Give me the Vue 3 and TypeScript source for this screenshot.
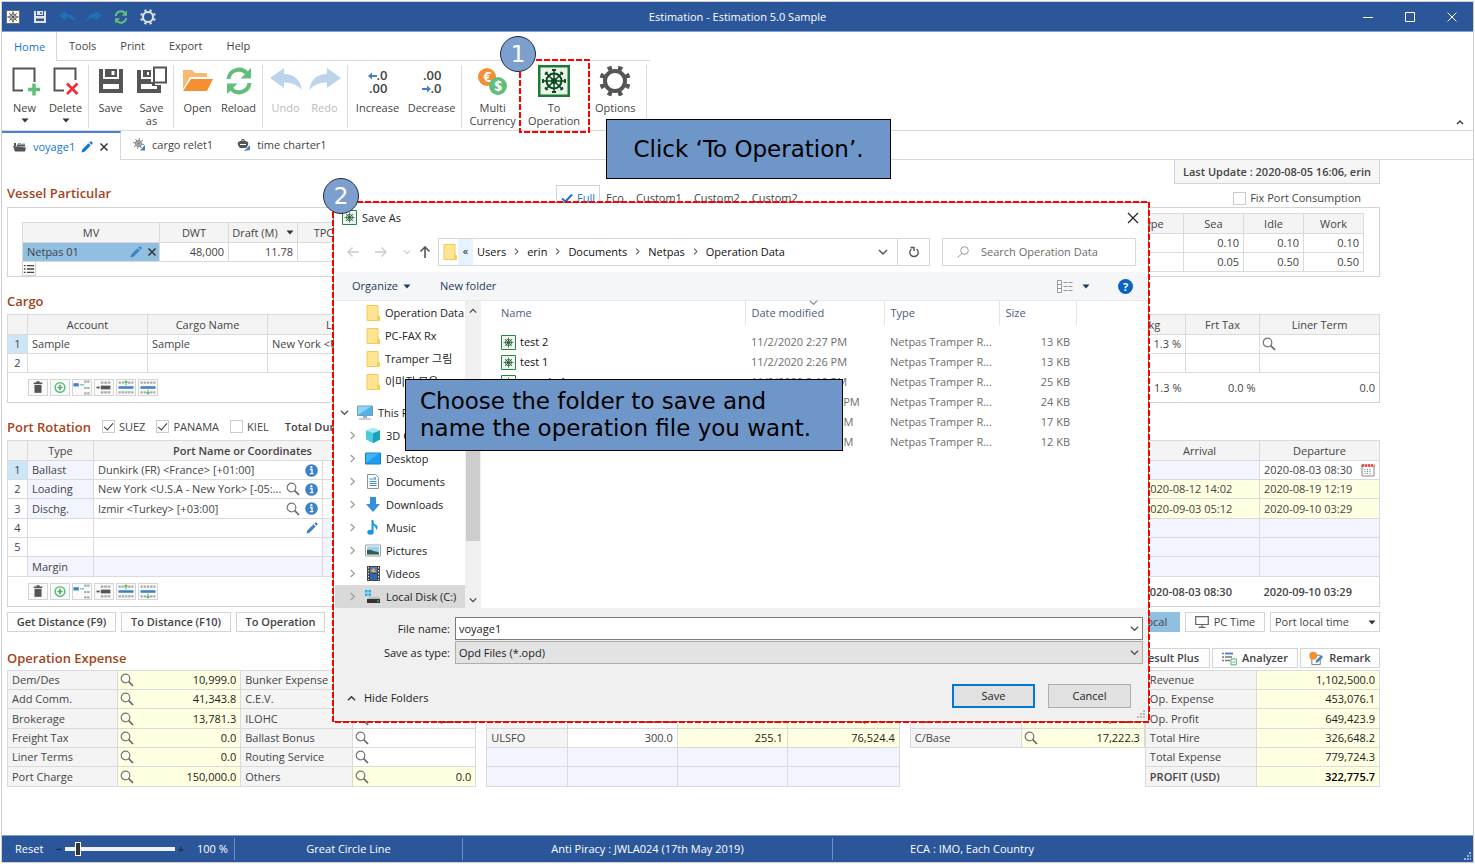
<script setup lang="ts">
import { ref } from 'vue'

interface RibbonItem { id: string; icon: string; lines: string[]; caret?: boolean; disabled?: boolean }
interface RibbonGroup { size: string; items: RibbonItem[] }

const menus: string[] = ['Home', 'Tools', 'Print', 'Export', 'Help']

const ribbon: RibbonGroup[] = [
  { size: 'g-new', items: [
    { id: 'new', icon: 'i-new', lines: ['New'], caret: true },
    { id: 'delete', icon: 'i-delete', lines: ['Delete'], caret: true },
  ] },
  { size: 'g-save', items: [
    { id: 'save', icon: 'i-disk', lines: ['Save'] },
    { id: 'saveas', icon: 'i-saveas', lines: ['Save', 'as'] },
  ] },
  { size: 'g-open', items: [
    { id: 'open', icon: 'i-open', lines: ['Open'] },
    { id: 'reload', icon: 'i-reload', lines: ['Reload'] },
  ] },
  { size: 'g-undo', items: [
    { id: 'undo', icon: 'i-undo', lines: ['Undo'], disabled: true },
    { id: 'redo', icon: 'i-redo', lines: ['Redo'], disabled: true },
  ] },
  { size: 'g-dec', items: [
    { id: 'inc', icon: 'inc', lines: ['Increase'] },
    { id: 'dec', icon: 'dec', lines: ['Decrease'] },
  ] },
  { size: 'g-ops', items: [
    { id: 'currency', icon: 'coins', lines: ['Multi', 'Currency'] },
    { id: 'operation', icon: 'i-helm', lines: ['To', 'Operation'] },
    { id: 'options', icon: 'i-gear', lines: ['Options'] },
  ] },
]

const rowTools: { icon: string; label: string }[] = [
  { icon: 't-trash', label: 'Delete row' },
  { icon: 't-plus', label: 'Add row' },
  { icon: 't-split', label: 'Split row' },
  { icon: 't-merge', label: 'Merge rows' },
  { icon: 't-above', label: 'Insert above' },
  { icon: 't-below', label: 'Insert below' },
]

interface PortRow { no: string; type: string; port: string; mag?: boolean; info?: boolean; pen?: boolean; arr: string; dep: string; state: string }
const ports: PortRow[] = [
  { no: '1', type: 'Ballast', port: 'Dunkirk (FR) <France> [+01:00]', info: true, arr: '', dep: '2020-08-03 08:30', state: 'first' },
  { no: '2', type: 'Loading', port: 'New York <U.S.A - New York> [-05:...', mag: true, info: true, arr: '2020-08-12 14:02', dep: '2020-08-19 12:19', state: 'calc' },
  { no: '3', type: 'Dischg.', port: 'Izmir <Turkey> [+03:00]', mag: true, info: true, arr: '2020-09-03 05:12', dep: '2020-09-10 03:29', state: 'calc' },
  { no: '4', type: '', port: '', pen: true, arr: '', dep: '', state: 'blank' },
  { no: '5', type: '', port: '', arr: '', dep: '', state: 'blank' },
  { no: '', type: 'Margin', port: '', arr: '', dep: '', state: 'margin' },
]

interface ExpenseRow { a: string; av: string; b: string; bv: string; white?: boolean }
const expenses: ExpenseRow[] = [
  { a: 'Dem/Des', av: '10,999.0', b: 'Bunker Expense', bv: '' },
  { a: 'Add Comm.', av: '41,343.8', b: 'C.E.V.', bv: '' },
  { a: 'Brokerage', av: '13,781.3', b: 'ILOHC', bv: '4,500.0', white: true },
  { a: 'Freight Tax', av: '0.0', b: 'Ballast Bonus', bv: '', white: true },
  { a: 'Liner Terms', av: '0.0', b: 'Routing Service', bv: '', white: true },
  { a: 'Port Charge', av: '150,000.0', b: 'Others', bv: '0.0' },
]
const bunkers: string[][] = [
  ['', '', '', ''],
  ['', '', '', ''],
  ['MGO', '300.0', '9.0', '3,409.7'],
  ['ULSFO', '300.0', '255.1', '76,524.4'],
  ['', '', '', ''],
  ['', '', '', ''],
]
const hires: string[][] = [['', ''], ['', ''], ['Net Hire', '8,002.3'], ['C/Base', '17,222.3']]
const results: string[][] = [
  ['Revenue', '1,102,500.0'],
  ['Op. Expense', '453,076.1'],
  ['Op. Profit', '649,423.9'],
  ['Total Hire', '326,648.2'],
  ['Total Expense', '779,724.3'],
  ['PROFIT (USD)', '322,775.7'],
]

const crumbs: string[] = ['Users', 'erin', 'Documents', 'Netpas', 'Operation Data']
const quickFolders: string[] = ['Operation Data', 'PC-FAX Rx', 'Tramper 그림', '이미지 모음']
const drives: { icon: string; name: string }[] = [
  { icon: 'd-cube', name: '3D Objects' },
  { icon: 'd-desktop', name: 'Desktop' },
  { icon: 'd-docs', name: 'Documents' },
  { icon: 'd-down', name: 'Downloads' },
  { icon: 'd-music', name: 'Music' },
  { icon: 'd-pics', name: 'Pictures' },
  { icon: 'd-video', name: 'Videos' },
  { icon: 'd-disk', name: 'Local Disk (C:)' },
]
const files: string[][] = [
  ['test 2', '11/2/2020 2:27 PM', '13 KB'],
  ['test 1', '11/2/2020 2:26 PM', '13 KB'],
  ['sample 1', '11/2/2020 2:19 PM', '25 KB'],
  ['', '10/27/2020 12:15 PM', '24 KB'],
  ['', '10/27/2020 5:11 PM', '17 KB'],
  ['', '10/27/2020 4:32 PM', '12 KB'],
]

const zoomLevel = ref(10)
const fileName = ref('voyage1')
const suez = ref(true)
const panama = ref(true)
const kiel = ref(false)
const fixPort = ref(false)
</script>

<template>
  <div class="window">
    <svg class="sprite" aria-hidden="true">
      <symbol id="i-new" viewBox="0 0 32 32"><path d="M14 25.500H4.500V3.500H25.500V17" fill="none" stroke="#555" stroke-width="2" /><path d="M19 24.500H31M25 18.500V30.500" stroke="#62bf78" stroke-width="3.500" /></symbol>
      <symbol id="i-delete" viewBox="0 0 32 32"><path d="M14 25.500H4.500V3.500H25.500V15" fill="none" stroke="#555" stroke-width="2" /><path d="M17 18.500L27.500 29M27.500 18.500L17 29" stroke="#ee2f33" stroke-width="2.800" /></symbol>
      <symbol id="i-disk" viewBox="0 0 32 32"><path d="M4 4H8V14H24V4H28V28H4ZM8 19V24H24V19Z" fill="currentColor" fill-rule="evenodd" /><path d="M10 4H22V12H10ZM16.500 6V10H19.500V6Z" fill="currentColor" fill-rule="evenodd" /></symbol>
      <symbol id="i-saveas" viewBox="0 0 32 32"><path d="M1 5H5V14H15V17H19V20H25V28H1ZM5 19V24H21V21H16V19Z" fill="#555" fill-rule="evenodd" /><path d="M7 5H15V12H7ZM11 7V10H13V7Z" fill="#555" fill-rule="evenodd" /><path d="M18 2.500H30V17.500H18Z" fill="#fff" stroke="#555" stroke-width="2" /></symbol>
      <symbol id="i-open" viewBox="0 0 32 32"><path d="M1 24V5H10L13 8H25V12H8Z" fill="#fbb873" /><path d="M9 14H31L25 26H1Z" fill="#f68f32" /></symbol>
      <symbol id="i-reload" viewBox="0 0 32 32"><path d="M5.500 14A10.500 10.500 0 0 1 24 8.500M26.500 18A10.500 10.500 0 0 1 8 23.500" fill="none" stroke="#63be7b" stroke-width="4" /><path d="M28 3V13.500H17.500ZM4 29V18.500H14.500Z" fill="#63be7b" /></symbol>
      <symbol id="i-undo" viewBox="0 0 32 32"><path d="M0 13L14 3V9Q29 9 32 25Q25 17 14 17.500V23Z" fill="currentColor" /></symbol>
      <symbol id="i-redo" viewBox="0 0 32 32"><path d="M32 13L18 3V9Q3 9 0 25Q7 17 18 17.500V23Z" fill="currentColor" /></symbol>
      <symbol id="i-gear" viewBox="0 0 32 32"><circle cx="16" cy="16" r="10" fill="none" stroke="currentColor" stroke-width="4" /><circle cx="16" cy="16" r="13.500" fill="none" stroke="currentColor" stroke-width="4.500" pathLength="160" stroke-dasharray="8 12" stroke-dashoffset="14" /></symbol>
      <symbol id="i-helm" viewBox="0 0 32 32"><rect x="0" y="0" width="32" height="32" fill="#1d7a34" /><rect x="2.500" y="2.500" width="27" height="27" fill="#e9f3eb" /><g stroke="#0c4a1c" fill="none"><circle cx="16" cy="16" r="7.500" stroke-width="2" /><circle cx="16" cy="16" r="2" stroke-width="2" /><path d="M16 4V28M4 16H28M7.500 7.500L24.500 24.500M24.500 7.500L7.500 24.500" stroke-width="1.500" /><path d="M14 5H18M14 27H18M5 14V18M27 14V18M7 9.500L9.500 7M22.500 25L25 22.500M25 9.500L22.500 7M7 22.500L9.500 25" stroke-width="1.800" /></g></symbol>
      <symbol id="i-helm-small" viewBox="0 0 15 15"><path d="M0.500 0.500H14.500V14.500H0.500Z" fill="#eef6f0" stroke="#2c8544" /><g stroke="#2d5f3b" fill="none"><circle cx="7.500" cy="7.500" r="3" /><path d="M7.500 2.500V12.500M2.500 7.500H12.500M4 4L11 11M11 4L4 11" stroke-width="0.800" /></g><circle cx="7.500" cy="7.500" r="1.200" fill="#2d5f3b" /></symbol>
      <symbol id="i-mag" viewBox="0 0 14 14"><circle cx="5.500" cy="5.500" r="4.300" fill="#fff" fill-opacity="0.500" stroke="#777" stroke-width="1.200" /><path d="M8.700 8.700L13 13" stroke="#666" stroke-width="1.700" /></symbol>
      <symbol id="i-info" viewBox="0 0 13 13"><circle cx="6.500" cy="6.500" r="6.300" fill="#3f83c6" /><path d="M5 5.500H7V9.500M4.800 9.700H8.400" stroke="#fff" stroke-width="1.300" fill="none" /><circle cx="6.400" cy="3.200" r="1.100" fill="#fff" /></symbol>
      <symbol id="i-pen" viewBox="0 0 12 12"><path d="M0.500 11.500L1.300 8.500L7.500 2.300L9.700 4.500L3.500 10.700ZM8.300 1.500L9.300 0.500Q10 0 10.700 0.700L11.300 1.300Q12 2 11.500 2.700L10.500 3.700Z" fill="currentColor" /></symbol>
      <symbol id="i-x" viewBox="0 0 10 10"><path d="M1.500 1.500L8.500 8.500M8.500 1.500L1.500 8.500" stroke="currentColor" stroke-width="1.500" /></symbol>
      <symbol id="i-down" viewBox="0 0 8 5"><path d="M0.500 0.500H7.500L4 4.500Z" fill="currentColor" /></symbol>
      <symbol id="i-chev" viewBox="0 0 10 10"><path d="M1 3L5 7L9 3" fill="none" stroke="currentColor" stroke-width="1.500" /></symbol>
      <symbol id="i-next" viewBox="0 0 10 10"><path d="M3 1L7 5L3 9" fill="none" stroke="currentColor" stroke-width="1.500" /></symbol>
      <symbol id="i-list" viewBox="0 0 14 14"><path d="M1 3H3M1 7H3M1 11H3M4.500 3H13M4.500 7H13M4.500 11H13" stroke="#444" stroke-width="1.500" /></symbol>
      <symbol id="t-trash" viewBox="0 0 16 14"><path d="M4 3H12M6.500 1.700H9.500" stroke="#555" stroke-width="1.300" /><path d="M4.700 4.500H11.300V12H4.700Z" fill="#555" /></symbol>
      <symbol id="t-plus" viewBox="0 0 16 14"><circle cx="8" cy="7" r="4.500" fill="#fff" stroke="#63be7b" stroke-width="1.500" /><path d="M5.500 7H10.500M8 4.500V9.500" stroke="#4db067" stroke-width="1.600" /></symbol>
      <symbol id="t-split" viewBox="0 0 16 14"><path d="M0 4.500H5" stroke="#3f83c6" stroke-width="3" /><path d="M6 4.500H10" stroke="#63be7b" stroke-width="1" /><path d="M10 1.500H15M10 7.500H15M10 12.500H15" stroke="#aaa" stroke-width="2" stroke-dasharray="2.200 0.600" /></symbol>
      <symbol id="t-merge" viewBox="0 0 16 14"><path d="M1 7H4" stroke="#555" stroke-width="1.600" /><path d="M5 7H14" stroke="#555" stroke-width="3.500" /><path d="M5 2.500H14M5 11.500H14" stroke="#aaa" stroke-width="2" stroke-dasharray="2.500 0.700" /></symbol>
      <symbol id="t-above" viewBox="0 0 16 14"><path d="M1 7H15" stroke="#3f83c6" stroke-width="2.400" /><path d="M1 2.500H6M10 2.500H15M1 11.500H15" stroke="#aaa" stroke-width="2" stroke-dasharray="2.200 0.800" /><path d="M8 5V1M6.500 2.500L8 1L9.500 2.500" stroke="#4db067" fill="none" /></symbol>
      <symbol id="t-below" viewBox="0 0 16 14"><path d="M1 7H15" stroke="#3f83c6" stroke-width="2.400" /><path d="M1 11.500H6M10 11.500H15M1 2.500H15" stroke="#aaa" stroke-width="2" stroke-dasharray="2.200 0.800" /><path d="M8 9V13M6.500 11.500L8 13L9.500 11.500" stroke="#4db067" fill="none" /></symbol>
      <symbol id="i-ship" viewBox="0 0 14 12"><path d="M0 5L13 6.500L12 10.500H2Z" fill="#555" /><path d="M1 2H3V5H1ZM4 3.500H12V5.500H4Z" fill="#555" /><path d="M5 2H8V3.500H5ZM9 2.500H12V4H9Z" fill="#6aa5dc" /></symbol>
      <symbol id="i-relet" viewBox="0 0 14 14"><circle cx="6.500" cy="5.500" r="3" fill="none" stroke="#777" /><path d="M7.500 0L5.500 11M1 4.500L12 6.500M3.500 1L9.500 10M11 2L2 9" stroke="#777" stroke-width="0.900" /><path d="M8 12.500L13 7V12.500Z" fill="#3f83c6" /></symbol>
      <symbol id="i-charter" viewBox="0 0 14 14"><path d="M1 4Q6 1 11 4Q12 7 9 10H3Q0 7 1 4Z" fill="#555" /><path d="M4 2.500Q6 0 8 2.500" fill="none" stroke="#555" /><path d="M7 13L13 7V12Z" fill="#3f83c6" /><path d="M3 6.500H9" stroke="#fff" /></symbol>
      <symbol id="i-cal" viewBox="0 0 14 14"><path d="M1 3V13H13V3" fill="#fff" stroke="#888" /><path d="M0.500 2.500H13.500" stroke="#e0393e" stroke-width="2.500" stroke-dasharray="2.500 0.600" /><path d="M3.500 6.500H11M3.500 8.500H11M3.500 10.500H11" stroke="#777" stroke-dasharray="1 1.500" /></symbol>
      <symbol id="i-pc" viewBox="0 0 14 12"><path d="M0.700 0.700H13.300V8.500H0.700ZM7 8.500V11M3.500 11.300H10.500" fill="none" stroke="#666" stroke-width="1.200" /></symbol>
      <symbol id="i-analyze" viewBox="0 0 15 14"><path d="M0 2H2M0 5.500H2M0 9H2" stroke="#777" stroke-width="1.500" /><path d="M3 2H11" stroke="#3f83c6" stroke-width="1.800" /><path d="M3 5.500H10M3 9H8" stroke="#777" stroke-width="1.500" /><path d="M9 7.500H14.300V13.300H9ZM10.500 10.500H13" fill="#fff" stroke="#4db067" /></symbol>
      <symbol id="i-remark" viewBox="0 0 16 15"><path d="M3 4H12V14H3Z" fill="#fff" stroke="#777" /><circle cx="4.500" cy="4.500" r="4.200" fill="#f68f32" /><path d="M7 12L7.500 9.500L13 4L15 6L9.500 11.500Z" fill="#3f83c6" /></symbol>
      <symbol id="i-folder" viewBox="0 0 14 16"><path d="M1 0.500H12V11L13.500 11.500V15.500H1Z" fill="#ffe591" stroke="#f3ca55" /><path d="M11 11H13.500V15.500H11Z" fill="#f6cf57" /></symbol>
      <symbol id="d-pc" viewBox="0 0 16 15"><path d="M0.500 1H15.500V10.500H0.500Z" fill="#4db5ee" stroke="#7f9aac" /><path d="M1 10L14 1.500H1Z" fill="#8bd3f8" /><path d="M6 11H10V13H6Z" fill="#9db0bd" /><path d="M2 14H14" stroke="#8b9aa5" /></symbol>
      <symbol id="d-cube" viewBox="0 0 16 15"><path d="M8 0L15 2.500V11.500L8 15L1 11.500V2.500Z" fill="#4ccbe0" /><path d="M8 5L15 2.500V11.500L8 15Z" fill="#1ba3b8" /><path d="M1 2.500L8 0L15 2.500L8 5Z" fill="#a5ecf5" /></symbol>
      <symbol id="d-desktop" viewBox="0 0 16 15"><path d="M0.500 2H15.500V13H0.500Z" fill="#1f9cf0" stroke="#1680c9" /><path d="M1 12L14 2.500H1Z" fill="#43b1f7" /></symbol>
      <symbol id="d-docs" viewBox="0 0 16 15"><path d="M2.500 0.500H10.500L13.500 3.500V14.500H2.500Z" fill="#fff" stroke="#8a949c" /><path d="M4.500 5H8M4.500 7.500H11.500M4.500 9.500H11.500M4.500 11.500H11.500" stroke="#3e8fd1" /><path d="M8.500 3H11V6H8.500Z" fill="#71b6ea" /></symbol>
      <symbol id="d-down" viewBox="0 0 16 15"><path d="M5 0H11V7H15L8 15L1 7H5Z" fill="#338fe0" /></symbol>
      <symbol id="d-music" viewBox="0 0 16 15"><path d="M7.500 0V12" stroke="#1296ec" stroke-width="2" /><path d="M7.500 0Q8 4 12 5.500Q13.500 8 11 10Q11.500 7 7.500 5Z" fill="#1296ec" /><ellipse cx="5.500" cy="12.300" rx="3.200" ry="2.500" fill="#1296ec" /></symbol>
      <symbol id="d-pics" viewBox="0 0 16 15"><path d="M0.500 2H15.500V13H0.500Z" fill="#fff" stroke="#98a1a8" /><path d="M2 3.500H14V11.500H2Z" fill="#9ad0f2" /><path d="M2 7Q6 6 8 8Q11 8 14 9.500V11.500H2Z" fill="#33604c" /></symbol>
      <symbol id="d-video" viewBox="0 0 16 15"><path d="M2 0H15V15H2Z" fill="#444" /><path d="M5 1H12V7H5Z" fill="#3f7fd0" /><path d="M5 8H12V14H5Z" fill="#2d65b8" /><path d="M6 4L9 2L11 6H7Z" fill="#f2a53b" /><path d="M3.500 1V14M13.500 1V14" stroke="#ddd" stroke-dasharray="1.500 1.500" /></symbol>
      <symbol id="d-disk" viewBox="0 0 16 15"><path d="M0 1H2.600V3.600H0ZM3.400 1H6V3.600H3.400ZM0 4.400H2.600V7H0ZM3.400 4.400H6V7H3.400Z" fill="#19b5e8" /><path d="M4 8H14L15 10H3Z" fill="#bbb" /><path d="M2 10H15V14H2Z" fill="#333" /><path d="M12 12H14" stroke="#4fd65d" /></symbol>
    </svg>

    <header class="titlebar">
      <div class="quick">
        <svg class="q-icon q-app"><use href="#i-helm" /></svg>
        <button type="button" class="bare" aria-label="Save"><svg class="q-icon"><use href="#i-disk" /></svg></button>
        <button type="button" class="bare q-dim" aria-label="Undo"><svg class="q-icon"><use href="#i-undo" /></svg></button>
        <button type="button" class="bare q-dim" aria-label="Redo"><svg class="q-icon"><use href="#i-redo" /></svg></button>
        <button type="button" class="bare" aria-label="Reload"><svg class="q-icon"><use href="#i-reload" /></svg></button>
        <button type="button" class="bare" aria-label="Options"><svg class="q-icon"><use href="#i-gear" /></svg></button>
      </div>
      <h1>Estimation - Estimation 5.0 Sample</h1>
      <div class="win-buttons">
        <button type="button" class="bare" aria-label="Minimize"><svg viewBox="0 0 10 10"><path d="M0 5.500H10" stroke="#fff" /></svg></button>
        <button type="button" class="bare" aria-label="Maximize"><svg viewBox="0 0 10 10"><path d="M0.500 0.500H9.500V9.500H0.500Z" stroke="#fff" fill="none" /></svg></button>
        <button type="button" class="bare" aria-label="Close"><svg viewBox="0 0 10 10"><path d="M0.500 0.500L9.500 9.500M9.500 0.500L0.500 9.500" stroke="#fff" /></svg></button>
      </div>
    </header>

    <nav class="menubar">
      <button v-for="(m, i) in menus" :key="m" type="button" class="bare menu" :class="{ active: i === 0 }">{{ m }}</button>
    </nav>

    <div class="ribbon">
      <div class="ribbon-groups">
        <div v-for="g in ribbon" :key="g.size" class="group" :class="g.size">
          <button v-for="b in g.items" :key="b.id" type="button" class="bare tool" :disabled="b.disabled">
            <span v-if="b.icon === 'inc'" class="decimals"><span><svg viewBox="0 0 9 8"><path d="M0 4L4 0.500V3H9V5H4V7.500Z" /></svg>.0</span><span>.00</span></span>
            <span v-else-if="b.icon === 'dec'" class="decimals"><span>.00</span><span><svg viewBox="0 0 9 8"><path d="M9 4L5 0.500V3H0V5H5V7.500Z" /></svg>.0</span></span>
            <span v-else-if="b.icon === 'coins'" class="coins"><b class="euro">€</b><b class="dollar">$</b></span>
            <svg v-else class="tool-icon"><use :href="'#' + b.icon" /></svg>
            <span v-for="l in b.lines" :key="l" class="tool-text">{{ l }}</span>
            <svg v-if="b.caret" class="caret"><use href="#i-down" /></svg>
          </button>
        </div>
      </div>
      <button type="button" class="bare collapse" aria-label="Collapse ribbon"><svg viewBox="0 0 8 6"><path d="M1 5L4 2L7 5" fill="none" stroke="#444" stroke-width="1.500" /></svg></button>
    </div>

    <nav class="doc-tabs">
      <div class="doc-tab current">
        <svg class="i14"><use href="#i-ship" /></svg><a href="#voyage1">voyage1</a>
        <svg class="i12 pen"><use href="#i-pen" /></svg>
        <button type="button" class="bare" aria-label="Close tab"><svg class="i10"><use href="#i-x" /></svg></button>
      </div>
      <div class="doc-rest">
        <div class="doc-tab"><svg class="i14"><use href="#i-relet" /></svg><a href="#relet">cargo relet1</a></div>
        <div class="doc-tab"><svg class="i14"><use href="#i-charter" /></svg><a href="#charter">time charter1</a></div>
      </div>
    </nav>

    <main class="sheet">
      <div class="update">Last Update : 2020-08-05 16:06, erin</div>

      <div class="vessel-head">
        <h2>Vessel Particular</h2>
        <div class="modes">
          <button type="button" class="bare mode on"><svg class="i12" viewBox="0 0 12 12"><path d="M1 6.500L4.500 9.500L11 2.500" fill="none" stroke="currentColor" stroke-width="2" /></svg>Full</button>
          <button type="button" class="bare mode">Eco</button>
          <button type="button" class="bare mode">Custom1</button>
          <button type="button" class="bare mode">Custom2</button>
          <button type="button" class="bare mode">Custom2</button>
        </div>
        <label class="check fix"><input v-model="fixPort" type="checkbox" />Fix Port Consumption</label>
      </div>

      <section class="vessel">
        <div class="vessel-left">
          <table class="grid">
            <colgroup><col class="w137" /><col class="w69" /><col class="w69" /><col class="w52" /></colgroup>
            <thead><tr><th>MV</th><th>DWT</th><th><span class="sortable">Draft (M)<svg class="caret"><use href="#i-down" /></svg></span></th><th>TPC</th></tr></thead>
            <tbody><tr><td class="picked"><div class="cell"><span>Netpas 01</span><span class="tail"><svg class="i12 pen2"><use href="#i-pen" /></svg><svg class="i10"><use href="#i-x" /></svg></span></div></td><td class="r">48,000</td><td class="r">11.78</td><td></td></tr></tbody>
          </table>
          <button type="button" class="list-btn" aria-label="Vessel list"><svg><use href="#i-list" /></svg></button>
        </div>
        <table class="grid cons">
          <colgroup><col class="w64" /><col class="w60" /><col class="w60" /><col class="w60" /></colgroup>
          <thead><tr><th>Type</th><th>Sea</th><th>Idle</th><th>Work</th></tr></thead>
          <tbody>
            <tr><td></td><td class="r">0.10</td><td class="r">0.10</td><td class="r">0.10</td></tr>
            <tr><td></td><td class="r">0.05</td><td class="r">0.50</td><td class="r">0.50</td></tr>
          </tbody>
        </table>
      </section>

      <div class="head"><h2>Cargo</h2></div>
      <table class="grid framed">
        <colgroup><col class="w20" /><col class="w120" /><col class="w120" /><col class="w182" /><col /><col class="w74" /><col class="w74" /><col class="w120" /></colgroup>
        <thead><tr><th></th><th>Account</th><th>Cargo Name</th><th>Loading Port</th><th></th><th>Brkg</th><th>Frt Tax</th><th>Liner Term</th></tr></thead>
        <tbody>
          <tr><td class="num sel">1</td><td>Sample</td><td>Sample</td><td>New York &lt;U.S.A - New York&gt;</td><td></td><td class="r">1.3 %</td><td></td><td class="tight"><svg class="i14"><use href="#i-mag" /></svg></td></tr>
          <tr><td class="num">2</td><td></td><td></td><td></td><td></td><td></td><td></td><td></td></tr>
        </tbody>
        <tfoot>
          <tr>
            <td></td>
            <td colspan="4"><div class="row-tools"><button v-for="t in rowTools" :key="t.icon" type="button" :aria-label="t.label"><svg><use :href="'#' + t.icon" /></svg></button></div></td>
            <td class="r">1.3 %</td><td class="r">0.0 %</td><td class="r">0.0</td>
          </tr>
        </tfoot>
      </table>

      <div class="head port-head">
        <h2>Port Rotation</h2>
        <label class="check"><input v-model="suez" type="checkbox" />SUEZ</label>
        <label class="check"><input v-model="panama" type="checkbox" />PANAMA</label>
        <label class="check"><input v-model="kiel" type="checkbox" />KIEL</label>
        <strong>Total Duration</strong>
      </div>
      <table class="grid framed">
        <colgroup><col class="w20" /><col class="w66" /><col class="w229" /><col class="w69" /><col /><col class="w120" /><col class="w120" /></colgroup>
        <thead><tr><th></th><th>Type</th><th colspan="2"><strong>Port Name or Coordinates</strong></th><th></th><th>Arrival</th><th>Departure</th></tr></thead>
        <tbody>
          <tr v-for="(p, i) in ports" :key="i" :class="p.state">
            <td class="num" :class="{ sel: i === 0 }">{{ p.no }}</td>
            <td class="type">{{ p.type }}</td>
            <td class="port"><div class="cell"><span>{{ p.port }}</span><span class="tail"><svg v-if="p.mag" class="i14"><use href="#i-mag" /></svg><svg v-if="p.info" class="i13"><use href="#i-info" /></svg><svg v-if="p.pen" class="i12 pen2"><use href="#i-pen" /></svg></span></div></td>
            <td class="extra"></td><td class="extra"></td>
            <td class="arr">{{ p.arr }}</td>
            <td class="dep"><div class="cell"><span>{{ p.dep }}</span><svg v-if="i === 0" class="i14"><use href="#i-cal" /></svg></div></td>
          </tr>
        </tbody>
        <tfoot>
          <tr>
            <td></td>
            <td colspan="4"><div class="row-tools"><button v-for="t in rowTools" :key="t.icon" type="button" :aria-label="t.label"><svg><use :href="'#' + t.icon" /></svg></button></div></td>
            <td><strong>2020-08-03 08:30</strong></td><td><strong>2020-09-10 03:29</strong></td>
          </tr>
        </tfoot>
      </table>

      <div class="actions">
        <button type="button" class="btn w108">Get Distance (F9)</button>
        <button type="button" class="btn w110">To Distance (F10)</button>
        <button type="button" class="btn w89">To Operation</button>
        <span class="push"></span>
        <button type="button" class="btn plain local w52">Local</button>
        <button type="button" class="btn plain w80"><svg class="i14"><use href="#i-pc" /></svg>PC Time</button>
        <span class="pick"><select aria-label="Time basis"><option>Port local time</option></select><svg class="caret"><use href="#i-down" /></svg></span>
      </div>

      <div class="result-head">
        <h2>Operation Expense</h2>
        <button type="button" class="btn w80">Result Plus</button>
        <button type="button" class="btn w86"><svg class="i15"><use href="#i-analyze" /></svg>Analyzer</button>
        <button type="button" class="btn w80"><svg class="i15"><use href="#i-remark" /></svg>Remark</button>
      </div>

      <div class="totals">
        <table class="grid expense">
          <colgroup><col /><col class="w123" /><col class="w112" /><col class="w123" /></colgroup>
          <tbody>
            <tr v-for="e in expenses" :key="e.a">
              <th scope="row">{{ e.a }}</th>
              <td class="calc-cell tight"><div class="cell"><svg class="i14"><use href="#i-mag" /></svg><span>{{ e.av }}</span></div></td>
              <th scope="row">{{ e.b }}</th>
              <td class="tight" :class="{ 'calc-cell': !e.white }"><div class="cell"><svg class="i14"><use href="#i-mag" /></svg><span>{{ e.bv }}</span></div></td>
            </tr>
          </tbody>
        </table>
        <table class="grid bunker">
          <colgroup><col /><col class="w110" /><col class="w110" /><col class="w112" /></colgroup>
          <tbody>
            <tr v-for="(b, i) in bunkers" :key="i" :class="{ empty: i > 3 }">
              <th scope="row">{{ b[0] }}</th><td class="r">{{ b[1] }}</td><td class="r calc-cell">{{ b[2] }}</td><td class="r calc-cell">{{ b[3] }}</td>
            </tr>
          </tbody>
        </table>
        <table class="grid hire">
          <colgroup><col /><col class="w123" /></colgroup>
          <tbody>
            <tr v-for="(h, i) in hires" :key="i">
              <th scope="row">{{ h[0] }}</th>
              <td class="calc-cell tight"><div class="cell"><svg v-if="i === 3" class="i14"><use href="#i-mag" /></svg><span class="tail">{{ h[1] }}</span></div></td>
            </tr>
          </tbody>
        </table>
        <table class="grid result">
          <colgroup><col /><col class="w123" /></colgroup>
          <tbody>
            <tr v-for="(r, i) in results" :key="r[0]" :class="{ total: i === 5 }"><th scope="row">{{ r[0] }}</th><td class="r calc-cell">{{ r[1] }}</td></tr>
          </tbody>
        </table>
      </div>
    </main>

    <footer class="status">
      <div class="zoomer">
        <button type="button" class="bare">Reset</button>
        <span class="sign">−</span><input v-model="zoomLevel" type="range" min="0" max="100" aria-label="Zoom" /><span class="sign">+</span>
        <span class="pct">100 %</span>
      </div>
      <div class="s-route">Great Circle Line</div>
      <div class="s-piracy">Anti Piracy : JWLA024 (17th May 2019)</div>
      <div class="s-eca">ECA : IMO, Each Country</div>
      <svg class="grip" viewBox="0 0 8 8"><path d="M6 1H8M4 4H8M1 7H8" stroke="#9ab3d8" stroke-width="2" stroke-dasharray="2 1" /></svg>
    </footer>

    <section class="dialog" role="dialog" aria-label="Save As">
      <div class="d-title"><svg class="i15"><use href="#i-helm-small" /></svg><span>Save As</span><button type="button" class="bare" aria-label="Close dialog"><svg viewBox="0 0 12 12"><path d="M1 1L11 11M11 1L1 11" stroke="#222" stroke-width="1.200" /></svg></button></div>

      <div class="d-nav">
        <button type="button" class="bare off" aria-label="Back"><svg viewBox="0 0 12 12"><path d="M12 6H1M5.500 1.500L1 6L5.500 10.500" fill="none" stroke="currentColor" stroke-width="1.300" /></svg></button>
        <button type="button" class="bare off" aria-label="Forward"><svg viewBox="0 0 12 12"><path d="M0 6H11M6.500 1.500L11 6L6.500 10.500" fill="none" stroke="currentColor" stroke-width="1.300" /></svg></button>
        <button type="button" class="bare off slim" aria-label="Recent"><svg class="c7"><use href="#i-chev" /></svg></button>
        <button type="button" class="bare up" aria-label="Up"><svg viewBox="0 0 12 12"><path d="M6 12V1M1.500 5.500L6 1L10.500 5.500" fill="none" stroke="#555" stroke-width="1.600" /></svg></button>
        <div class="address">
          <svg class="folder"><use href="#i-folder" /></svg>
          <span class="more">«</span>
          <template v-for="(c, i) in crumbs" :key="c">
            <a href="#path">{{ c }}</a><svg v-if="i < 4" class="sep"><use href="#i-next" /></svg>
          </template>
          <svg class="drop"><use href="#i-chev" /></svg>
          <button type="button" class="bare refresh" aria-label="Refresh"><svg viewBox="0 0 12 12"><path d="M8.500 3A4.200 4.200 0 1 1 3.500 3" fill="none" stroke="#555" stroke-width="1.400" /><path d="M2.500 1.500H6V5" fill="none" stroke="#555" stroke-width="1.400" /></svg></button>
        </div>
        <label class="search"><svg viewBox="0 0 12 12"><circle cx="7.500" cy="4.500" r="3.800" fill="none" stroke="#999" /><path d="M5 7.500L0.500 11.500" stroke="#999" /></svg><input type="text" placeholder="Search Operation Data" aria-label="Search Operation Data" /></label>
      </div>

      <div class="d-bar">
        <button type="button" class="bare organize">Organize<svg class="caret"><use href="#i-down" /></svg></button>
        <button type="button" class="bare">New folder</button>
        <span class="push"></span>
        <button type="button" class="bare view" aria-label="Change view"><svg class="view-icon" viewBox="0 0 16 13"><path d="M0.500 0.500H4.500V12.500H0.500ZM0.500 4.500H4.500M0.500 8.500H4.500" fill="#fff" stroke="#999" /><path d="M6.500 2.500H16M6.500 6.500H16M6.500 10.500H16" stroke="#999" stroke-dasharray="4 1" /></svg><svg class="caret"><use href="#i-down" /></svg></button>
        <button type="button" class="bare help" aria-label="Help">?</button>
      </div>

      <div class="d-body">
        <ul class="tree">
          <li v-for="f in quickFolders" :key="f" class="leaf"><svg class="folder"><use href="#i-folder" /></svg>{{ f }}</li>
          <li class="root"><svg class="arrow dark"><use href="#i-chev" /></svg><svg class="node"><use href="#d-pc" /></svg>This PC</li>
          <li v-for="d in drives" :key="d.name" :class="{ chosen: d.icon === 'd-disk' }"><svg class="arrow"><use href="#i-next" /></svg><svg class="node"><use :href="'#' + d.icon" /></svg>{{ d.name }}</li>
        </ul>
        <div class="scroll">
          <svg class="up-arrow"><use href="#i-chev" /></svg>
          <div class="thumb"></div>
          <svg><use href="#i-chev" /></svg>
        </div>
        <div class="files">
          <table>
            <colgroup><col class="f-name" /><col class="f-date" /><col class="f-type" /><col class="f-size" /><col /></colgroup>
            <thead><tr><th>Name</th><th><svg class="sort-mark"><use href="#i-chev" /></svg>Date modified</th><th>Type</th><th>Size</th><th class="end"></th></tr></thead>
            <tbody>
              <tr v-for="f in files" :key="f[1]"><td><span class="file"><svg class="i15"><use href="#i-helm-small" /></svg>{{ f[0] }}</span></td><td>{{ f[1] }}</td><td>Netpas Tramper R...</td><td class="r">{{ f[2] }}</td><td></td></tr>
            </tbody>
          </table>
        </div>
      </div>

      <div class="d-foot">
        <div class="field"><label for="fname">File name:</label><span class="box"><input id="fname" v-model="fileName" type="text" /><svg><use href="#i-chev" /></svg></span></div>
        <div class="field"><label for="ftype">Save as type:</label><span class="box gray"><select id="ftype"><option>Opd Files (*.opd)</option></select><svg><use href="#i-chev" /></svg></span></div>
        <div class="d-buttons">
          <button type="button" class="bare hide"><svg><use href="#i-chev" /></svg>Hide Folders</button>
          <span class="push"></span>
          <button type="button" class="d-btn primary">Save</button>
          <button type="button" class="d-btn">Cancel</button>
        </div>
      </div>
      <svg class="d-grip" viewBox="0 0 8 8"><path d="M6 1H8M3 4H8M0 7H8" stroke="#bbb" stroke-width="2" stroke-dasharray="2 1" /></svg>
      <svg class="dash"><rect x="0" y="0" width="100%" height="100%" /></svg>
    </section>

    <div class="mark"><svg class="dash"><rect x="0" y="0" width="100%" height="100%" /></svg></div>
    <div class="badge one">1</div>
    <div class="badge two">2</div>
    <p class="note note-a">Click ‘To Operation’.</p>
    <p class="note note-b">Choose the folder to save and<br />name the operation file you want.</p>
  </div>
</template>

<style>
body { margin: 0; background: #fff; }
</style>

<style scoped>
* { box-sizing: border-box; }
.window {
  position: relative; display: flex; flex-direction: column; min-height: calc(100vh - 2px);
  margin: 1px; border: 1px solid #cfcfcf; background: #fff; color: #444;
  font: 11px/16px "Open Sans", "Noto Sans", "Noto Sans CJK KR", sans-serif;
}
.sprite { position: absolute; width: 0; height: 0; }
svg { display: block; flex: none; }
button, input, select { font: inherit; color: inherit; }
.bare { border: 0; padding: 0; background: none; }
.push { flex: 1; }
.i10 { width: 10px; height: 10px; color: #333; }
.i12 { width: 12px; height: 12px; }
.i13 { width: 13px; height: 13px; }
.i14 { width: 14px; height: 14px; }
.i15 { width: 15px; height: 15px; }
.caret { width: 8px; height: 5px; color: #333; }
.pen { color: #1277d3; }
.pen2 { color: #3f83c6; }

.titlebar { display: flex; align-items: center; height: 30px; background: #2b579a; border-bottom: 1px solid #7fa3d6; color: #fff; }
.quick { display: flex; flex: 1 1 16px; align-items: center; gap: 11px; padding-left: 4px; color: #e4e4e4; }
.q-icon { width: 16px; height: 16px; }
.q-app { width: 14px; height: 14px; margin-right: 1px; filter: grayscale(1) brightness(1.1); }
.q-dim { color: #1f70b8; }
h1 { margin: 0; font-size: 11px; font-weight: 400; }
.win-buttons { display: flex; flex: 1 1 16px; justify-content: flex-end; gap: 32px; padding-right: 16px; }
.win-buttons svg { width: 10px; height: 10px; }

.menubar { display: flex; height: 29px; }
.menu { padding: 0 12px; border-bottom: 1px solid #d8d8d8; }
.menu.active { width: 55px; border-right: 1px solid #d8d8d8; border-bottom: 0; color: #1277d3; }
.menubar::after { content: ""; width: 388px; border-bottom: 1px solid #d8d8d8; }

.ribbon { display: flex; justify-content: space-between; align-items: flex-end; height: 70px; border-bottom: 1px solid #d8d8d8; }
.ribbon-groups { display: flex; height: 100%; padding: 4px 0 2px; }
.group { display: flex; justify-content: center; border-right: 1px solid #dcdcdc; }
.tool { display: flex; flex-direction: column; align-items: center; justify-content: flex-start; flex: 0 1 41px; min-width: 0; line-height: 13px; white-space: nowrap; }
.tool:disabled { color: #bbb; }
.tool:disabled .tool-icon { color: #bcd3ec; }
.tool-icon { width: 32px; height: 32px; margin-bottom: 4px; color: #555; }
.tool .caret { margin-top: 4px; }
.g-new { width: 87px; }
.g-save { width: 85px; }
.g-open { width: 89px; }
.g-undo { width: 85px; }
.g-undo .tool { flex-basis: 39px; }
.g-dec { width: 114px; }
.g-dec .tool { flex-basis: 54px; }
.g-ops { width: 185px; }
.g-ops .tool { flex-basis: 63px; }
.decimals { display: flex; flex: none; flex-direction: column; align-items: flex-end; height: 32px; margin-bottom: 4px; padding-top: 4px; font-size: 13px; font-weight: 600; line-height: 13px; }
.decimals span { display: flex; align-items: center; }
.decimals svg { width: 9px; height: 8px; fill: #3f83c6; }
.coins { display: flex; flex: none; align-items: flex-start; height: 32px; margin-bottom: 4px; padding-top: 3px; }
.coins b { width: 18px; height: 18px; border-radius: 50%; color: #fff; font-size: 14px; line-height: 18px; }
.euro { background: #f68f32; }
.dollar { margin: 9px 0 0 -7px; background: #63be7b; }
.collapse { padding: 0 9px 5px 0; }
.collapse svg { width: 8px; height: 6px; }

.doc-tabs { display: flex; height: 29px; }
.doc-tab { display: flex; align-items: center; gap: 6px; }
.doc-tab a { color: #444; text-decoration: none; }
.doc-tab.current { width: 119px; padding-left: 11px; border-top: 2px solid #4a7fdb; border-right: 1px solid #d8d8d8; }
.doc-tab.current a { color: #1277d3; }
.doc-rest { display: flex; flex: 1; gap: 24px; padding: 0 0 0 11px; border-bottom: 1px solid #d8d8d8; }

.sheet { display: flex; flex-direction: column; padding: 0 93px 30px 5px; }
.update { align-self: flex-end; height: 24px; padding: 0 8px; border: 1px solid #d4d4d4; border-top: 0; background: #f6f6f6; font-weight: 600; line-height: 24px; }
h2 { margin: 0; color: #a5431a; font-size: 13px; font-weight: 600; line-height: 18px; white-space: nowrap; }
.vessel-head { display: flex; height: 23px; }
.vessel-head h2 { flex: 0 0 549px; }
.modes { display: flex; align-items: flex-end; }
.mode { height: 22px; padding: 3px 6px 0; line-height: 18px; }
.mode.on { display: flex; align-items: center; gap: 4px; padding: 2px 4px 0; border: 1px solid #d4d4d4; border-bottom: 0; color: #1277d3; }
.check { display: flex; align-items: center; gap: 4px; }
.check input {
  position: relative; appearance: none; width: 13px; height: 13px; margin: 0; border: 1px solid #ccc; background: #fff;
}
.check input:checked::after { content: ""; position: absolute; left: 3px; top: 0; width: 4px; height: 8px; border: solid #333; border-width: 0 1px 1px 0; transform: rotate(40deg); }
.fix { height: 18px; margin: 5px 19px 0 auto; }

.vessel { display: flex; justify-content: space-between; align-items: flex-start; height: 70px; padding: 0 15px 0 14px; border: 1px solid #d4d4d4; }
.vessel-left { width: 328px; padding-top: 14px; }
.list-btn { width: 14px; height: 14px; padding: 0; border: 1px solid #d4d4d4; border-top: 0; background: #fff; }
.list-btn svg { width: 12px; height: 12px; }
.cons.grid { width: 245px; margin-top: 5px; }

.grid { width: 100%; border-collapse: collapse; table-layout: fixed; }
.grid tr { height: 19px; }
.grid thead tr, .grid tbody tr:nth-child(3n) { height: 20px; }
.grid th, .grid td { padding: 0 4px; border: 1px solid #dadada; overflow: hidden; font-weight: 400; line-height: 16px; text-align: left; white-space: nowrap; }
.grid th { background: #f4f4f4; }
.grid thead th { text-align: center; }
.grid .r { text-align: right; }
.grid strong { font-weight: 600; }
.grid tfoot tr { height: 30px; }
.grid tfoot td { border: 0; border-top: 1px solid #dadada; }
.framed { border: 1px solid #d4d4d4; }
.grid .num { padding: 0; text-align: center; }
.grid .sel { background: #cde6f7; }
.grid .picked { background: #90bfe1; }
.grid .tight { padding-left: 2px; }
.cell { display: flex; align-items: center; justify-content: space-between; }
.tail { display: flex; align-items: center; gap: 5px; margin-left: auto; }
.picked .tail { margin-right: -2px; }
.sortable { display: flex; align-items: center; justify-content: center; gap: 8px; }
.w20 { width: 20px; } .w52 { width: 52px; } .w60 { width: 60px; } .w64 { width: 64px; } .w66 { width: 66px; }
.w69 { width: 69px; } .w74 { width: 74px; } .w80 { width: 80px; } .w86 { width: 86px; }
.w89 { width: 89px; } .w108 { width: 109px; } .w110 { width: 110px; } .w112 { width: 112px; } .w120 { width: 120px; }
.w123 { width: 123px; } .w137 { width: 137px; } .w182 { width: 182px; } .w229 { width: 229px; }

.row-tools { display: flex; gap: 2px; margin-left: -4px; }
.row-tools button { width: 20px; height: 17px; padding: 0; border: 1px solid #d4d4d4; background: #fafafa; }
.row-tools svg { width: 18px; height: 15px; }

.head { display: flex; align-items: center; gap: 11px; height: 37px; padding-top: 10px; }
.port-head strong { margin-left: 5px; font-weight: 600; }
.first .type, .calc .type, .margin td { background: #f2f5ff; }
.margin .num { background: #fff; }
.blank .extra, .blank .arr, .blank .dep, .first .arr { background: #f2f5ff; }
.calc .arr, .calc .dep, .grid .calc-cell { background: #ffffe1; }
.calc-cell { color: #222; }

.actions { display: flex; gap: 5px; margin-top: 5px; }
.btn { display: flex; align-items: center; justify-content: center; gap: 5px; height: 20px; padding: 0; border: 1px solid #d4d4d4; background: #fdfdfd; font-weight: 600; line-height: 16px; white-space: nowrap; }
.btn.plain { font-weight: 400; }
.local.btn { border-color: #90bfe1; background: #90bfe1; }
.pick { position: relative; width: 110px; }
.pick select { appearance: none; width: 100%; height: 20px; padding: 0 4px; border: 1px solid #d4d4d4; border-radius: 0; background: #fff; }
.pick .caret { position: absolute; right: 4px; top: 8px; pointer-events: none; }
.result-head { display: flex; align-items: flex-end; gap: 2px; height: 38px; padding-bottom: 2px; }
.result-head h2 { margin: 0 auto 1px 0; }
.totals { display: flex; align-items: flex-start; }
.expense { flex: 470 1 0; margin-right: 10px; }
.bunker { flex: 414 1 0; margin-right: 10px; }
.hire { flex: 235 1 0; }
.result { flex: 235 1 0; }
.empty th, .empty td, .grid .empty .calc-cell { background: #f2f5ff; }
.total th, .total td { font-weight: 600; }
.total td { color: #000; }

.status { display: flex; align-items: center; height: 27px; margin-top: auto; border-top: 1px solid #7f9cc8; background: #2b579a; color: #fff; text-align: center; }
.status > div { height: 22px; line-height: 22px; border-right: 1px solid #6f8fc0; }
.zoomer { display: flex; align-items: center; width: 233px; padding-left: 13px; }
.zoomer input { appearance: none; width: 110px; height: 16px; margin: 0; background: none; }
.zoomer input::-webkit-slider-runnable-track { height: 4px; background: #f1f1f1; }
.zoomer input::-webkit-slider-thumb { appearance: none; width: 6px; height: 14px; margin-top: -5px; border: 1px solid #fff; background: #333; }
.sign { width: 12px; color: #1c3050; font-weight: 700; }
.zoomer button { width: 28px; margin-right: 10px; }
.pct { margin-left: 10px; }
.s-route { width: 228px; }
.s-piracy { width: 370px; }
.status > .s-eca { width: 278px; border: 0; }
.grip { width: 8px; height: 8px; margin: auto 2px 2px auto; }

.dialog { position: absolute; left: 331px; top: 200px; display: flex; flex-direction: column; width: 816px; height: 520px; padding: 1px; border: 1px solid #777; background: #fff; color: #222; }
.dash { position: absolute; inset: -1px; width: calc(100% + 2px); height: calc(100% + 2px); overflow: visible; pointer-events: none; }
.dash rect { fill: none; stroke: #f00; stroke-width: 2; stroke-dasharray: 6 2; }
.d-title { display: flex; align-items: center; gap: 5px; height: 27px; padding: 0 8px 0 7px; }
.d-title button { margin-left: auto; }
.d-title button svg { width: 12px; height: 12px; }
.d-nav { display: flex; align-items: center; height: 41px; padding: 0 11px 0 12px; }
.d-nav button svg { width: 12px; height: 12px; }
.d-nav .off { margin-right: 16px; color: #ccc; }
.d-nav .slim { margin-right: 8px; }
.d-nav .off .c7 { width: 8px; height: 8px; }
.up { margin-right: 7px; }
.address { display: flex; align-items: center; flex: 1; height: 28px; padding-left: 4px; border: 1px solid #d9d9d9; }
.address a { color: #111; text-decoration: none; }
.folder { width: 14px; height: 16px; }
.more { width: 15px; height: 26px; margin: 0 4px 0 1px; background: #e5f3ff; line-height: 24px; text-align: center; }
.sep { width: 7px; height: 7px; margin: 0 7px; color: #555; }
.drop { width: 10px; height: 10px; margin: 0 9px 0 auto; color: #555; }
.address .refresh { height: 26px; padding: 0 9px 0 10px; border-left: 1px solid #d9d9d9; }
.search { display: flex; align-items: center; gap: 12px; width: 194px; height: 28px; margin-left: 12px; padding-left: 14px; border: 1px solid #d9d9d9; }
.search svg { width: 12px; height: 12px; }
.search input { width: 150px; padding: 0; border: 0; outline: 0; background: none; }
.search input::placeholder { color: #6d6d6d; opacity: 1; }
.d-bar { display: flex; align-items: center; height: 29px; padding: 0 14px 0 17px; border-bottom: 1px solid #e5e8ec; background: #f5f6f7; color: #1e395b; }
.d-bar .caret { color: #1e395b; }
.organize { display: flex; align-items: center; gap: 5px; margin-right: 29px; }
.view { display: flex; align-items: center; gap: 9px; margin-right: 28px; }
.view-icon { width: 16px; height: 13px; }
.help { width: 15px; height: 15px; border-radius: 50%; background: #0a63c4; color: #fff; font-weight: 700; line-height: 15px; }
.d-body { display: flex; flex: 1; min-height: 0; }
.tree { width: 130px; margin: 0; padding: 0; list-style: none; white-space: nowrap; }
.tree li { display: flex; align-items: center; height: 23px; padding-left: 13px; }
.tree .leaf { padding-left: 31px; }
.tree .leaf .folder { margin-right: 5px; }
.tree .root { margin-top: 8px; padding-left: 5px; }
.tree .arrow { width: 9px; height: 9px; margin-right: 8px; color: #a0a0a0; }
.tree .dark { color: #555; }
.tree .node { width: 16px; height: 15px; margin-right: 5px; }
.tree .chosen { background: #d9d9d9; }
.scroll { display: flex; flex-direction: column; align-items: center; justify-content: space-between; width: 16px; padding: 6px 0 4px; background: #f0f0f0; }
.scroll svg { width: 8px; height: 8px; color: #444; }
.up-arrow { transform: rotate(180deg); }
.thumb { width: 14px; height: 150px; margin-top: 20px; background: #cdcdcd; }
.files { flex: 1; padding-left: 20px; }
.files table { width: 100%; border-collapse: collapse; table-layout: fixed; }
.files th { position: relative; height: 24px; padding: 0 6px; border-left: 1px solid #e5e5e5; color: #4c607a; font-weight: 400; text-align: left; }
.files th:first-child, .files td:first-child { padding-left: 0; border: 0; }
.files tbody::before { content: ""; display: block; height: 7px; }
.files td { height: 20px; padding: 0 6px; color: #6d6d6d; line-height: 16px; white-space: nowrap; }
.files .r { text-align: right; }
.file { display: flex; align-items: center; gap: 4px; color: #111; }
.f-name { width: 244px; } .f-date { width: 139px; } .f-type { width: 115px; } .f-size { width: 77px; }
.sort-mark { position: absolute; left: 63px; top: -3px; width: 9px; height: 9px; color: #999; }
.d-foot { height: 112px; padding: 9px 4px 0 0; background: #f0f0f0; }
.field { display: flex; align-items: center; gap: 5px; margin-bottom: 1px; }
.field label { width: 115px; text-align: right; }
.box { position: relative; flex: 1; height: 23px; border: 1px solid #7a7a7a; background: #fff; }
.box input, .box select { appearance: none; width: 100%; height: 21px; padding: 0 3px; border: 0; outline: 0; background: none; }
.box svg { position: absolute; right: 3px; top: 6px; width: 9px; height: 9px; color: #555; pointer-events: none; }
.box.gray { border-color: #adadad; background: #e3e3e3; }
.d-buttons { display: flex; align-items: center; gap: 13px; padding: 19px 12px 0 12px; }
.hide { display: flex; align-items: center; gap: 8px; padding-top: 4px; }
.hide svg { width: 9px; height: 9px; color: #333; transform: rotate(180deg); }
.d-btn { width: 83px; height: 24px; padding: 0; border: 1px solid #adadad; background: #e1e1e1; }
.primary { border: 2px solid #0078d7; }
.d-grip { position: absolute; right: 3px; bottom: 3px; width: 8px; height: 8px; }

.mark { position: absolute; left: 519px; top: 59px; width: 67px; height: 70px; }
.badge { position: absolute; width: 36px; height: 36px; border: 1px solid #1d2b3e; border-radius: 50%; background: #7d9fce; color: #fff; font: 23px/34px "DejaVu Sans", sans-serif; text-align: center; }
.one { left: 498px; top: 34px; }
.two { left: 321px; top: 176px; }
.note { position: absolute; display: flex; margin: 0; border: 1px solid #000; background: #6e96c8; color: #000; font: 23px/27px "DejaVu Sans", sans-serif; white-space: nowrap; }
.note-a { left: 604px; top: 117px; width: 285px; height: 60px; align-items: center; justify-content: center; }
.note-b { display: block; left: 403px; top: 377px; width: 438px; height: 72px; padding: 8px 14px; }
</style>
